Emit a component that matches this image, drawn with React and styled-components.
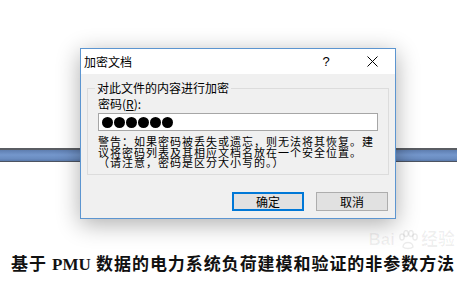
import React from "react";
import styled, { createGlobalStyle } from "styled-components";

const Global = createGlobalStyle`
  html, body { margin: 0; padding: 0; background: #fff; }
  body { width: 457px; height: 288px; overflow: hidden; }
`;

const UI = `"Noto Sans CJK SC", "Noto Sans", sans-serif`;

const Page = styled.div`
  position: relative;
  width: 457px;
  height: 288px;
  padding-top: 148px;
  box-sizing: border-box;
  background: #fff;
`;

const Bar = styled.div`
  height: 14px;
  box-sizing: border-box;
  border-top: 2px solid #5a5d63;
  border-bottom: 1px solid #4d5461;
  background: linear-gradient(#5e7eb0, #7497cc 45%, #6a8cc0 80%, #5a7aab);
`;

const Caption = styled.div`
  margin-top: 92px;
  padding-left: 11px;
  font-family: "Liberation Serif", "Noto Sans CJK SC", serif;
  font-weight: bold;
  font-size: 17px;
  line-height: 21px;
  letter-spacing: 0.95px;
  color: #111;
  white-space: nowrap;
`;

const Latin = styled.span`
  letter-spacing: 0;
`;

const Watermark = styled.div`
  position: absolute;
  right: 2px;
  top: 230px;
  display: flex;
  align-items: flex-end;
  gap: 2px;
  font-family: "Liberation Sans", "Noto Sans CJK SC", sans-serif;
  font-weight: bold;
  color: rgba(0, 0, 0, 0.06);
  font-size: 17px;
  line-height: 20px;
`;

const Dialog = styled.div`
  position: absolute;
  left: 80px;
  top: 48px;
  width: 316px;
  height: 171px;
  box-sizing: border-box;
  border: 1px solid #5c95d0;
  background: #f0f0f0;
  box-shadow: 0 5px 22px rgba(0, 0, 0, 0.32);
  display: flex;
  flex-direction: column;
  font-family: ${UI};
  font-size: 12px;
  color: #000;
`;

const TitleBar = styled.div`
  height: 25px;
  flex: none;
  background: #fff;
  display: flex;
  align-items: center;
  padding-left: 3px;
`;

const Title = styled.div`
  flex: 1;
  font-size: 12px;
  line-height: 16px;
`;

const TitleButton = styled.div`
  width: ${(p) => p.$w}px;
  height: 25px;
  display: flex;
  align-items: center;
  justify-content: center;
  font-family: "Liberation Sans", sans-serif;
  font-size: 13px;
`;

const Body = styled.div`
  flex: 1;
  display: flex;
  flex-direction: column;
  padding: 0 6px 7px 6px;
`;

const Group = styled.fieldset`
  margin: 6px 0 0 0;
  padding: 1px 10px 6px 10px;
  border: 1px solid #dcdcdc;
  min-width: 0;
`;

const Legend = styled.legend`
  margin-left: -3px;
  padding: 0 2px;
  font-size: 12px;
  line-height: 16px;
`;

const Label = styled.div`
  font-size: 12px;
  line-height: 14px;
`;

const PasswordBox = styled.div`
  margin-top: 2px;
  height: 18px;
  box-sizing: border-box;
  border: 1px solid #a6a6a6;
  background: #fff;
  display: flex;
  align-items: center;
  gap: 1px;
  padding-left: 3px;
`;

const Dot = styled.span`
  width: 11px;
  height: 11px;
  border-radius: 50%;
  background: #000;
`;

const Warning = styled.p`
  margin: 5px 0 0 0;
  font-size: 11px;
  line-height: 10.7px;
  letter-spacing: 1px;
`;

const Buttons = styled.div`
  margin-top: auto;
  display: flex;
  justify-content: flex-end;
  gap: 12px;
  padding-right: 1px;
`;

const Button = styled.div`
  width: 72px;
  height: 19px;
  box-sizing: border-box;
  border: ${(p) => (p.$primary ? "2px solid #0078d7" : "1px solid #adadad")};
  background: #e1e1e1;
  display: flex;
  align-items: center;
  justify-content: center;
  font-size: 12px;
  line-height: 14px;
`;

const CloseIcon = () => (
  <svg width="11" height="11" viewBox="0 0 11 11">
    <path d="M0.5 0.5 L10.5 10.5 M10.5 0.5 L0.5 10.5" stroke="#000" strokeWidth="1" />
  </svg>
);

const Paw = () => (
  <svg width="22" height="20" viewBox="0 0 22 20">
    <g fill="none" stroke="rgba(0,0,0,0.08)" strokeWidth="1.4">
      <ellipse cx="5" cy="7" rx="2.2" ry="3" />
      <ellipse cx="9" cy="3.5" rx="2.2" ry="3" />
      <ellipse cx="14" cy="3.5" rx="2.2" ry="3" />
      <ellipse cx="18" cy="7" rx="2.2" ry="3" />
      <path d="M6 17 C6 11 16 11 16 17 C14 19 8 19 6 17Z" />
    </g>
  </svg>
);

export default function App() {
  return (
    <>
      <Global />
      <Page>
        <Bar />
        <Caption>
          基于 <Latin>PMU</Latin> 数据的电力系统负荷建模和验证的非参数方法
        </Caption>
        <Watermark>
          <span>Bai</span>
          <Paw />
          <span>经验</span>
        </Watermark>
        <Dialog>
          <TitleBar>
            <Title>加密文档</Title>
            <TitleButton $w={46}>?</TitleButton>
            <TitleButton $w={46}>
              <CloseIcon />
            </TitleButton>
          </TitleBar>
          <Body>
            <Group>
              <Legend>对此文件的内容进行加密</Legend>
              <Label>密码(<u>R</u>):</Label>
              <PasswordBox>
                {Array.from({ length: 6 }).map((_, i) => (
                  <Dot key={i} />
                ))}
              </PasswordBox>
              <Warning>
                警告：如果密码被丢失或遗忘，则无法将其恢复。建议将密码列表及其相应文档名放在一个安全位置。（请注意，密码是区分大小写的。）
              </Warning>
            </Group>
            <Buttons>
              <Button $primary>确定</Button>
              <Button>取消</Button>
            </Buttons>
          </Body>
        </Dialog>
      </Page>
    </>
  );
}
